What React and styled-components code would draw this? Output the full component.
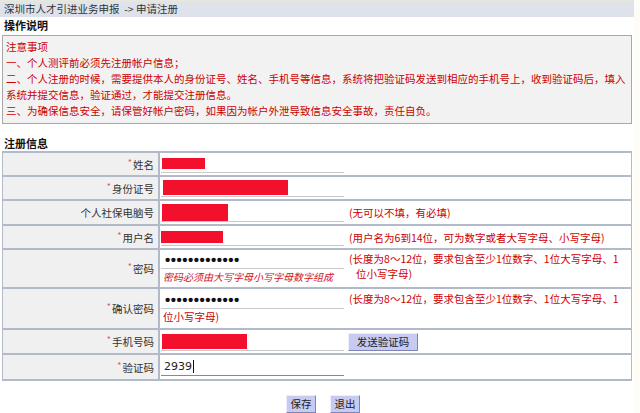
import React from 'react';
import styled, { createGlobalStyle } from 'styled-components';

const GlobalStyle = createGlobalStyle`
  html, body {
    margin: 0;
    padding: 0;
    background: #fdfcf6;
  }
  body {
    font-family: "Noto Sans CJK SC", "Noto Sans", sans-serif;
    font-size: 10.5px;
    color: #333333;
  }
`;

const Page = styled.div`
  width: 634px;
  min-height: 413px;
  background: #ffffff;
  display: flex;
  flex-direction: column;
`;

const TopBar = styled.div`
  height: 17px;
  line-height: 17px;
  padding-left: 4px;
  background: linear-gradient(#e9e8da 0, #dfe3ea 3px, #dde2ea 100%);
  color: #333333;
  white-space: nowrap;
`;

const SectionTitle = styled.div`
  height: 16px;
  line-height: 16px;
  padding-left: 4px;
  font-weight: bold;
  font-size: 11px;
  color: #111111;
  margin-top: ${props => props.gap || 0}px;
`;

const Notice = styled.div`
  margin: 2px 2px 0 2px;
  height: 84px;
  border: 1px solid #a8a8a8;
  background: #f2f2f2;
  padding: 3px 4px 0 3px;
  color: #cc0000;
  line-height: 16px;
`;

const NoticeLine = styled.div`
  white-space: nowrap;
`;

const Form = styled.div`
  margin: 0 2px;
  border-top: 2px solid #b2b9c8;
  border-left: 1px solid #b2b9c8;
  border-right: 1px solid #b2b9c8;
`;

const Row = styled.div`
  display: grid;
  grid-template-columns: 157px 1fr;
  height: ${props => props.h}px;
  border-bottom: 2px solid #b2b9c8;
  box-sizing: border-box;
`;

const Label = styled.div`
  background: #f0f0f0;
  border-right: 2px solid #b2b9c8;
  display: flex;
  align-items: center;
  justify-content: flex-end;
  padding-right: 4px;
  color: #333333;
  white-space: nowrap;
`;

const Star = styled.span`
  color: #e25a5a;
  font-size: 9px;
  margin-right: 1px;
  position: relative;
  top: -2px;
`;

const Cell = styled.div`
  display: flex;
  align-items: ${props => (props.top ? 'flex-start' : 'center')};
  padding-left: 1px;
  padding-top: ${props => props.pt || 0}px;
  background: #ffffff;
`;

const Stack = styled.div`
  display: flex;
  flex-direction: column;
`;

const Line = styled.div`
  display: flex;
  align-items: flex-start;
`;

const Input = styled.div`
  width: 183px;
  height: 18px;
  box-sizing: border-box;
  border-bottom: 1px solid ${props => (props.focus ? '#7a7cf0' : '#c9c9c9')};
  display: flex;
  align-items: center;
  padding-left: ${props => props.pl ?? 1}px;
  font-family: "DejaVu Sans", sans-serif;
  font-size: 11px;
  color: #222222;
`;

const Redact = styled.span`
  display: inline-block;
  width: ${props => props.w}px;
  height: ${props => props.h}px;
  background: #f3102c;
`;

const Dots = styled.span`
  font-family: "Liberation Sans", sans-serif;
  font-size: 15px;
  font-weight: bold;
  letter-spacing: 0.5px;
  color: #111111;
  padding-left: 3px;
  line-height: 1;
`;

const Caret = styled.span`
  display: inline-block;
  width: 1px;
  height: 13px;
  background: #111111;
  margin-left: 1px;
`;

const Note = styled.div`
  color: #cc1122;
  font-style: italic;
  font-size: 10px;
  line-height: 15px;
  padding-left: 2px;
  white-space: nowrap;
`;

const Hint = styled.div`
  color: #cc0000;
  margin-left: 5px;
  line-height: 15px;
  white-space: nowrap;
`;

const HintCont = styled.div`
  padding-left: 7px;
`;

const WrapLine = styled.div`
  color: #cc0000;
  line-height: 15px;
  padding-left: 2px;
`;

const PlainButton = styled.button`
  font-family: "Noto Sans CJK SC", sans-serif;
  font-size: 10.5px;
  color: #222222;
  background: #c7cbf2;
  border-style: solid;
  border-width: 1px;
  border-color: #eceefe #7f84b8 #7f84b8 #eceefe;
  height: 18px;
  width: ${props => props.w}px;
  padding: 0;
  margin-left: ${props => props.ml || 0}px;
  line-height: 16px;
  cursor: pointer;
`;

const Actions = styled.div`
  display: flex;
  justify-content: center;
  gap: 14px;
  margin-top: 14px;
  padding-left: 12px;
`;

export default function App() {
  return (
    <>
      <GlobalStyle />
      <Page>
        <TopBar>深圳市人才引进业务申报 &nbsp;-&gt; 申请注册</TopBar>
        <SectionTitle>操作说明</SectionTitle>
        <Notice>
          <NoticeLine>注意事项</NoticeLine>
          <NoticeLine>一、个人测评前必须先注册帐户信息；</NoticeLine>
          <NoticeLine>二、个人注册的时候，需要提供本人的身份证号、姓名、手机号等信息，系统将把验证码发送到相应的手机号上，收到验证码后，填入</NoticeLine>
          <NoticeLine>系统并提交信息，验证通过，才能提交注册信息。</NoticeLine>
          <NoticeLine>三、为确保信息安全，请保管好帐户密码，如果因为帐户外泄导致信息安全事故，责任自负。</NoticeLine>
        </Notice>
        <SectionTitle gap={11}>注册信息</SectionTitle>
        <Form>
          <Row h={24}>
            <Label><Star>*</Star>姓名</Label>
            <Cell>
              <Input><Redact w={43} h={11} /></Input>
            </Cell>
          </Row>
          <Row h={24}>
            <Label><Star>*</Star>身份证号</Label>
            <Cell>
              <Input pl={2}><Redact w={125} h={15} /></Input>
            </Cell>
          </Row>
          <Row h={25}>
            <Label>个人社保电脑号</Label>
            <Cell>
              <Input><Redact w={66} h={17} /></Input>
              <Hint>(无可以不填，有必填)</Hint>
            </Cell>
          </Row>
          <Row h={24}>
            <Label><Star>*</Star>用户名</Label>
            <Cell>
              <Input pl={0}><Redact w={62} h={12} /></Input>
              <Hint>(用户名为6到14位，可为数字或者大写字母、小写字母)</Hint>
            </Cell>
          </Row>
          <Row h={39}>
            <Label><Star>*</Star>密码</Label>
            <Cell top pt={1}>
              <Stack>
                <Input><Dots>•••••••••••••</Dots></Input>
                <Note>密码必须由大写字母小写字母数字组成</Note>
              </Stack>
              <Hint>
                <div>(长度为8～12位，要求包含至少1位数字、1位大写字母、1</div>
                <HintCont>位小写字母)</HintCont>
              </Hint>
            </Cell>
          </Row>
          <Row h={41}>
            <Label><Star>*</Star>确认密码</Label>
            <Cell top pt={2}>
              <Stack>
                <Line>
                  <Input><Dots>•••••••••••••</Dots></Input>
                  <Hint>(长度为8～12位，要求包含至少1位数字、1位大写字母、1</Hint>
                </Line>
                <WrapLine>位小写字母)</WrapLine>
              </Stack>
            </Cell>
          </Row>
          <Row h={25}>
            <Label><Star>*</Star>手机号码</Label>
            <Cell>
              <Input><Redact w={85} h={15} /></Input>
              <PlainButton w={70} ml={4}>发送验证码</PlainButton>
            </Cell>
          </Row>
          <Row h={26}>
            <Label><Star>*</Star>验证码</Label>
            <Cell>
              <Input focus pl={3}>2939<Caret /></Input>
            </Cell>
          </Row>
        </Form>
        <Actions>
          <PlainButton w={30}>保存</PlainButton>
          <PlainButton w={30}>退出</PlainButton>
        </Actions>
      </Page>
    </>
  );
}
